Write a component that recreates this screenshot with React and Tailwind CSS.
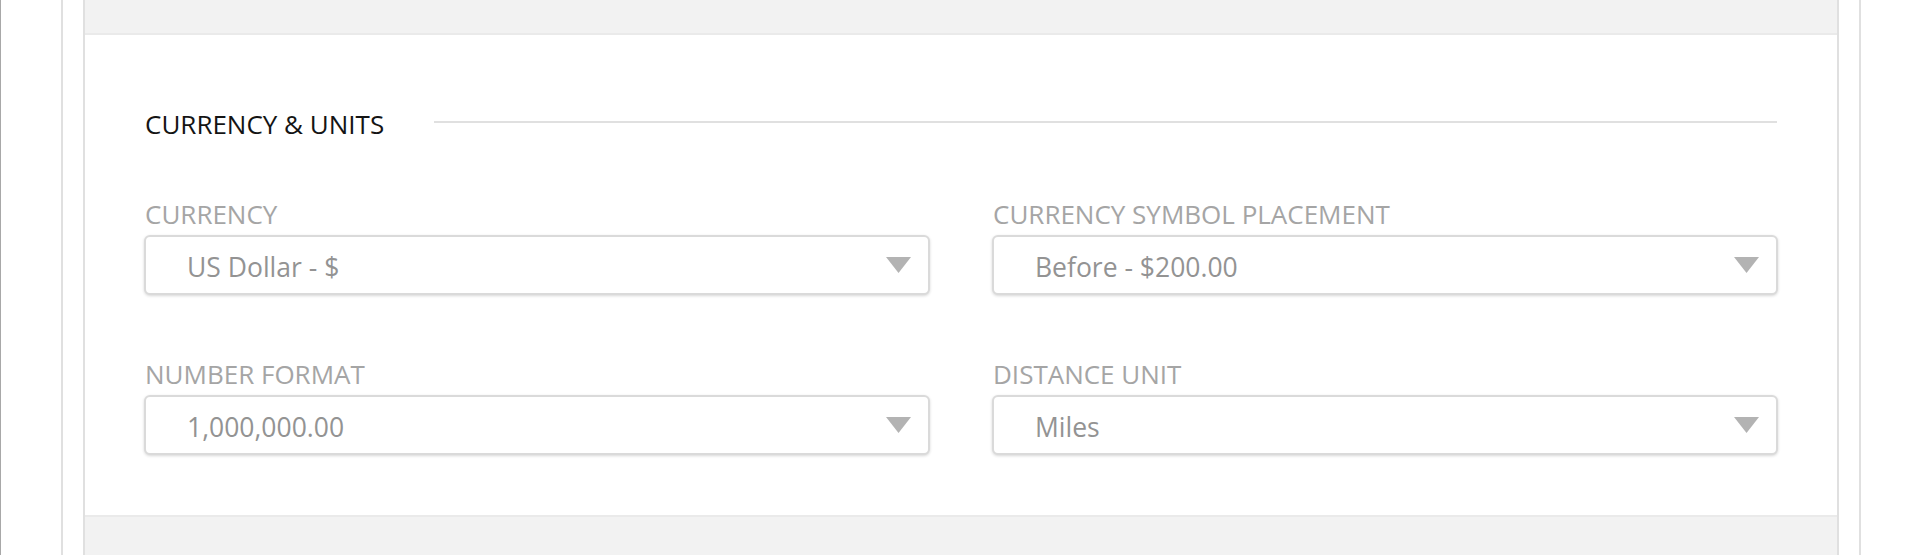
const fields = [
  { label: 'CURRENCY', value: 'US Dollar - $' },
  { label: 'CURRENCY SYMBOL PLACEMENT', value: 'Before - $200.00' },
  { label: 'NUMBER FORMAT', value: '1,000,000.00' },
  { label: 'DISTANCE UNIT', value: 'Miles' },
]

function SelectBox({ value }) {
  return (
    <div className="flex h-[60px] items-center justify-between rounded-[6px] border-2 border-[#dadada] bg-white pl-[41px] pr-[17px] pt-[4px] shadow-[0_1px_3px_rgba(0,0,0,0.16)]">
      <span className="text-[26.5px] leading-none text-[#939393]">{value}</span>
      <svg width="25" height="16" viewBox="0 0 25 16" className="mt-[-4px]">
        <polygon points="0,0 25,0 12.5,16" fill="#b3b3b3" />
      </svg>
    </div>
  )
}

export default function App() {
  return (
    <div
      className="flex h-[555px] w-full overflow-hidden border-l border-[#a8a8a8] bg-white"
      style={{ fontFamily: '"Open Sans", "Noto Sans", sans-serif' }}
    >
      <div className="ml-[60px] flex h-full w-[1800px] border-x-2 border-[#e0e0e0] px-[20px]">
        <div className="flex h-full flex-1 flex-col border-x-2 border-[#e0e0e0]">
          {/* top strip */}
          <div className="h-[35px] shrink-0 border-b-2 border-[#eaeaea] bg-[#f2f2f2]" />

          {/* currency & units */}
          <div className="h-[480px] shrink-0 px-[59px] pt-[76px]">
            <div className="flex items-center gap-[50px] pl-[1px] pr-[1px]">
              <h2 className="text-[26px] leading-[26px] text-[#141414]">CURRENCY &amp; UNITS</h2>
              <div className="mt-[-4px] h-[2px] flex-1 bg-[#e0e0e0]" />
            </div>

            <div className="mt-[64px] grid grid-cols-2 gap-x-[62px] gap-y-[66px]">
              {fields.map((f) => (
                <div key={f.label}>
                  <p className="mb-[8px] pl-[1px] text-[26px] leading-[26px] text-[#a5a5a5]">{f.label}</p>
                  <SelectBox value={f.value} />
                </div>
              ))}
            </div>
          </div>

          {/* bottom strip */}
          <div className="flex-1 border-t-2 border-[#eaeaea] bg-[#f2f2f2]" />
        </div>
      </div>
    </div>
  )
}
